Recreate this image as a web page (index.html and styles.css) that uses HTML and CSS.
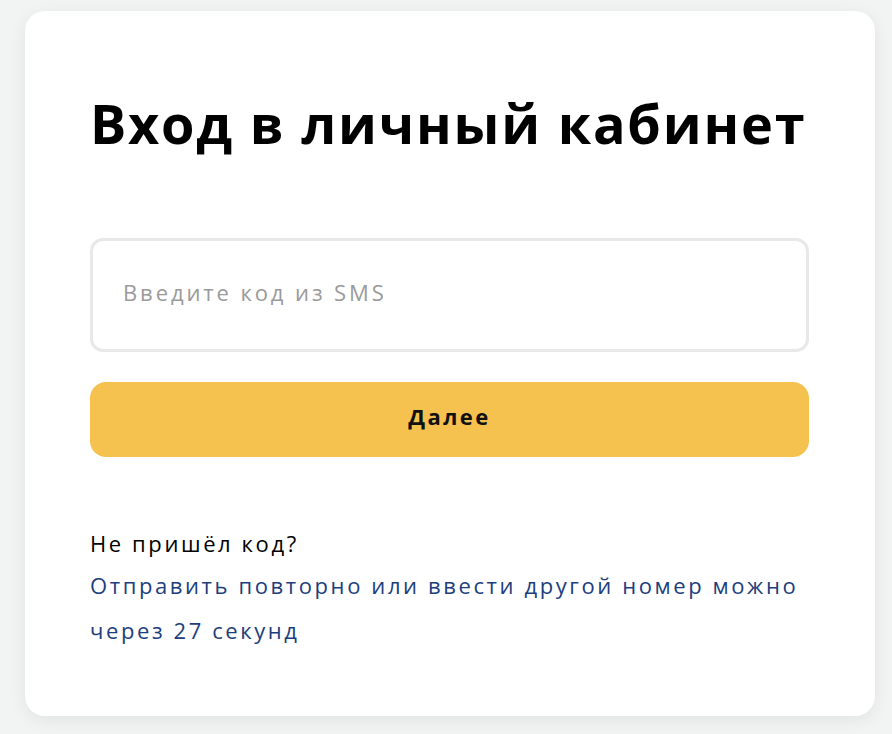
FILE: index.html
```html
<!DOCTYPE html>
<html lang="ru">
<head>
<meta charset="utf-8">
<link rel="stylesheet" href="styles.css">
</head>
<body>
<div class="page">
  <div class="card">
    <h1 class="title">Вход в личный кабинет</h1>
    <div class="field"><span class="placeholder">Введите код из SMS</span></div>
    <button class="btn">Далее</button>
    <div class="resend">
      <p class="q">Не пришёл код?</p>
      <p class="link">Отправить повторно или ввести другой номер можно через 27 секунд</p>
    </div>
  </div>
</div>
</body>
</html>
```

FILE: styles.css
```css
html, body { margin: 0; padding: 0; }
body {
  background: #f2f3f3;
  font-family: "Open Sans", "Noto Sans", sans-serif;
  width: 892px;
  height: 734px;
  overflow: hidden;
}
.page {
  padding: 11px 17px 0 25px;
}
.card {
  box-sizing: border-box;
  width: 850px;
  height: 705px;
  background: #fff;
  border-radius: 20px;
  box-shadow: 0 4px 18px rgba(0,0,0,0.07);
  padding: 77px 66px 0 65px;
}
.title {
  margin: 0;
  font-size: 54px;
  font-weight: 700;
  line-height: 70px;
  color: #000;
  letter-spacing: 1.8px;
  white-space: nowrap;
}
.field {
  margin-top: 80px;
  box-sizing: border-box;
  height: 114px;
  border: 3px solid #e8e8e8;
  border-radius: 13px;
  display: flex;
  align-items: center;
  padding: 0 30px 6px 30px;
}
.placeholder {
  font-size: 22px;
  color: #9a9a9a;
  letter-spacing: 2.9px;
}
.btn {
  display: block;
  width: 100%;
  margin-top: 30px;
  height: 75px;
  border: none;
  border-radius: 16px;
  background: #f5c24f;
  font-family: inherit;
  font-size: 22px;
  font-weight: 700;
  letter-spacing: 2.4px;
  color: #111;
  padding: 0 0 7px 0;
  cursor: pointer;
}
.resend {
  margin-top: 66px;
}
.resend p {
  margin: 0;
  font-size: 22px;
  letter-spacing: 2.6px;
}
.q { color: #000; line-height: 40px; }
.link { color: #1c3e7c; line-height: 45px; }
```
